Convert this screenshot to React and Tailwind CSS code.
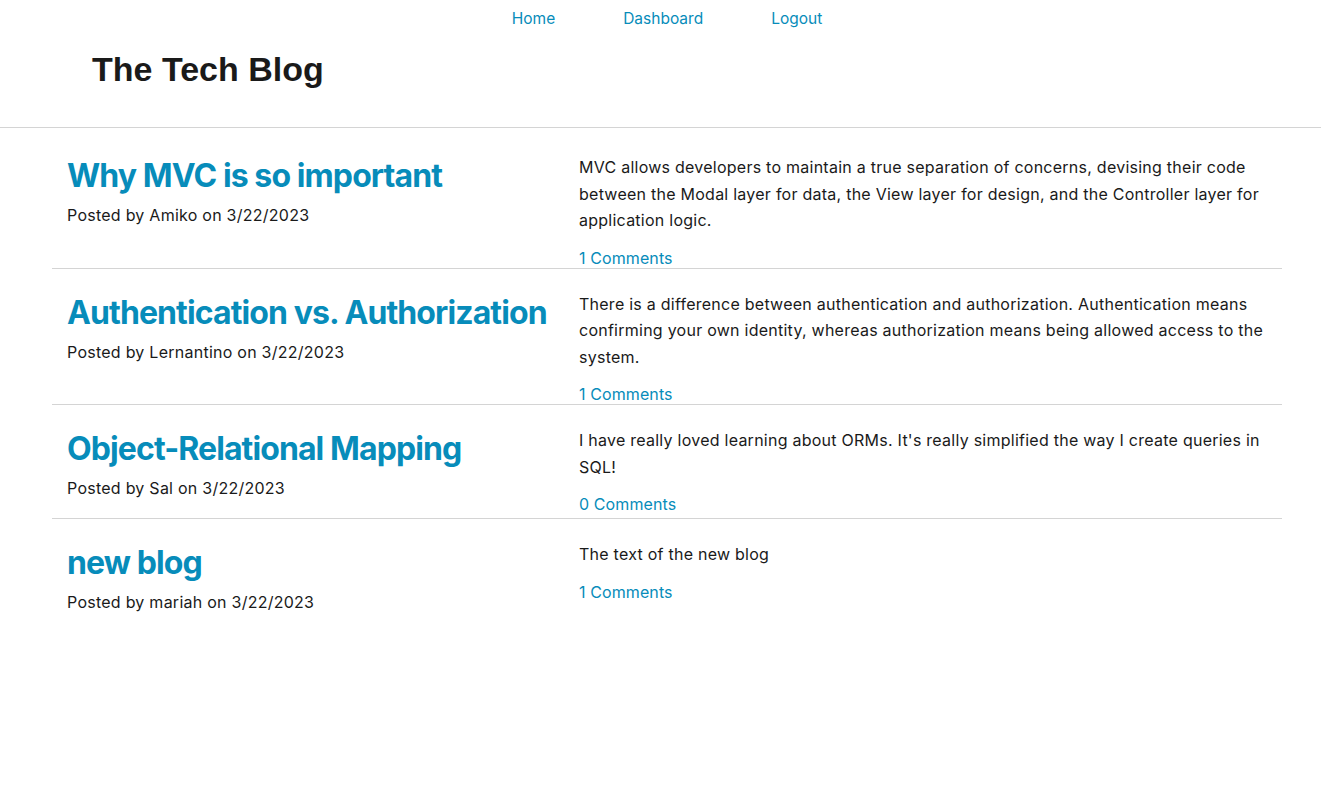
import React from "react";

const posts = [
  {
    title: "Why MVC is so important",
    author: "Amiko",
    date: "3/22/2023",
    body: "MVC allows developers to maintain a true separation of concerns, devising their code between the Modal layer for data, the View layer for design, and the Controller layer for application logic.",
    comments: 1,
  },
  {
    title: "Authentication vs. Authorization",
    author: "Lernantino",
    date: "3/22/2023",
    body: "There is a difference between authentication and authorization. Authentication means confirming your own identity, whereas authorization means being allowed access to the system.",
    comments: 1,
  },
  {
    title: "Object-Relational Mapping",
    author: "Sal",
    date: "3/22/2023",
    body: "I have really loved learning about ORMs. It's really simplified the way I create queries in SQL!",
    comments: 0,
  },
  {
    title: "new blog",
    author: "mariah",
    date: "3/22/2023",
    body: "The text of the new blog",
    comments: 1,
  },
];

const PostRow = ({ post, last }) => {
  return (
    <div
      className={`flex pt-[22px] ${last ? "" : "border-b border-[#d4d4d4]"}`}
    >
      <div className="w-[512px] shrink-0 px-[15px] pb-[18px]">
        <h2 className="mt-[3px] text-[32px] leading-[38px] font-bold tracking-[-0.9px] text-[#078cba] whitespace-nowrap">
          <a href="#">{post.title}</a>
        </h2>
        <p className="mt-[8px] text-[16px] leading-[24px] tracking-[0.25px] text-[#1a1a1a]">
          Posted by {post.author} on {post.date}
        </p>
      </div>
      <div className="flex-1 px-[15px]">
        <p className="text-[16px] leading-[26.5px] tracking-[0.25px] text-[#1a1a1a] mb-[14px]">
          {post.body}
        </p>
        <a
          href="#"
          className="block text-[16px] leading-[20px] tracking-[0.1px] text-[#078cba]"
        >
          {post.comments} Comments
        </a>
      </div>
    </div>
  );
};

const App = () => {
  return (
    <div
      className="min-h-[804px] bg-white"
      style={{ fontFamily: "Inter, 'Noto Sans', sans-serif" }}
    >
      <header className="h-[128px] border-b border-[#d4d4d4]">
        <nav className="flex justify-center gap-[68px] pl-[13px] pt-[8px] text-[15.5px] leading-[22px] text-[#078cba]">
          <a href="#">Home</a>
          <a href="#">Dashboard</a>
          <a href="#">Logout</a>
        </nav>
        <h1
          className="ml-[92px] mt-[19px] text-[34px] leading-[40px] font-bold text-[#1a1a1a]"
          style={{ fontFamily: "'Liberation Sans', Arial, sans-serif" }}
        >
          The Tech Blog
        </h1>
      </header>
      <main className="mx-[52px] mt-[4px] w-[1230px]">
        {posts.map((post, i) => (
          <PostRow key={post.title} post={post} last={i === posts.length - 1} />
        ))}
      </main>
    </div>
  );
};

export default App;
